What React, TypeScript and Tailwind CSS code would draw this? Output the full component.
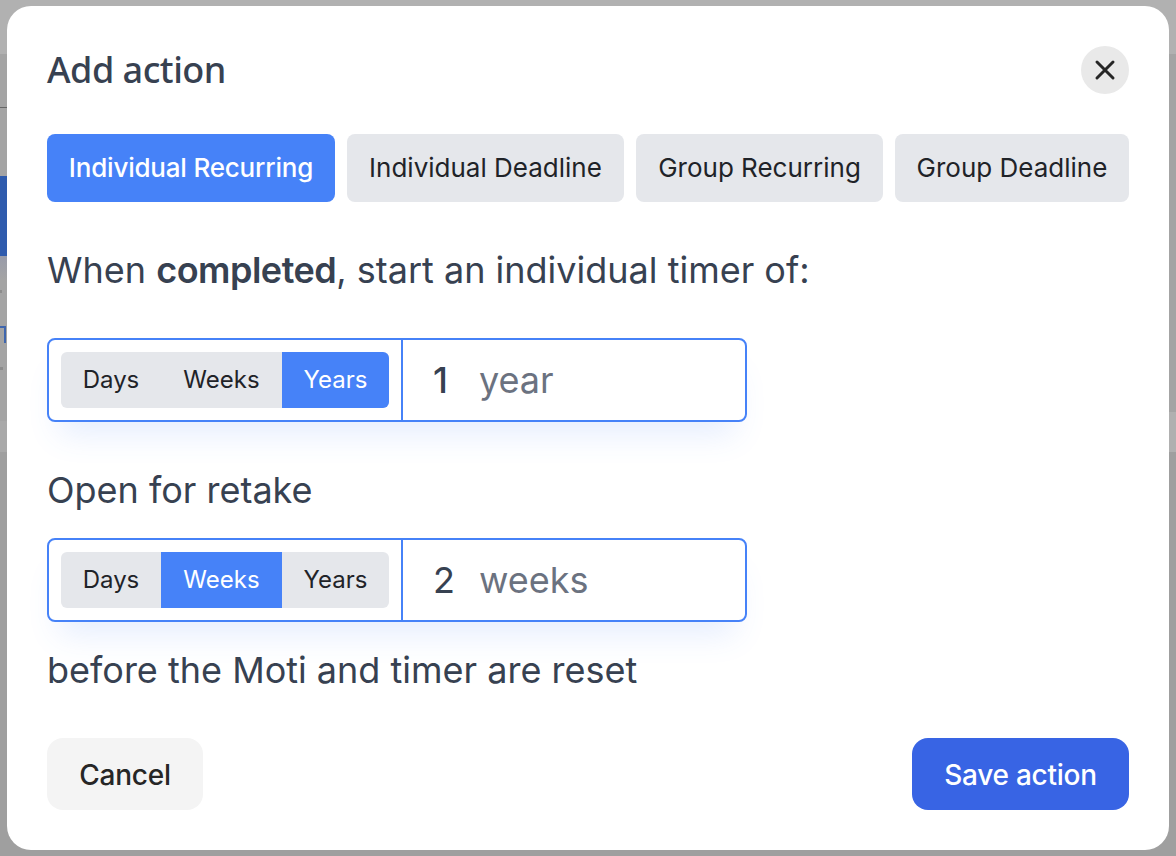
import { useState } from 'react'

const units = [
    { name: 'Days', width: 'w-[100px]' },
    { name: 'Weeks', width: 'w-[121px]' },
    { name: 'Years', width: 'w-[107px]' },
]
const tabs = ['Individual Recurring', 'Individual Deadline', 'Group Recurring', 'Group Deadline']

function Backdrop() {
    return (
        <div className="absolute inset-0 flex flex-col overflow-hidden">
            <div className="h-[54px] bg-[#b1b1b1]" />
            <div className="relative h-[122px] bg-[#a4a4a4]">
                <div className="absolute left-0 top-[53px] h-px w-[7px] bg-[#666]" />
            </div>
            <div className="h-[80px] bg-[#a4a4a4]">
                <div className="h-full w-[20px] bg-[#2f5bad]" />
            </div>
            <div className="relative h-[156px] bg-[#a4a4a4]">
                <div className="absolute left-0 top-0 h-6 w-[20px] bg-gradient-to-b from-[#989ba9] to-[#a4a4a4]" />
                <div className="absolute left-0 top-[34px] h-[3px] w-[2px] bg-[#8c8c8c]" />
                {/* sliver of page content showing past the modal edge */}
                <div className="absolute left-0 top-[70px] h-[2px] w-[5px] bg-[#3f66ad]" />
                <div className="absolute left-[4px] top-[70px] h-[17px] w-[2px] bg-[#3f66ad]" />
                <div className="absolute left-0 top-[111px] h-[3px] w-[3px] bg-[#8c8c8c]" />
            </div>
            <div className="flex h-[40px]">
                <div className="w-[20px] bg-[#a4a4a4]">
                    <div className="mt-[9px] h-[31px] bg-[#a9a9a9]" />
                </div>
                <div className="flex-1 bg-[#b0b0b0]" />
            </div>
            <div className="flex-1 bg-[#9f9f9f]" />
        </div>
    )
}

function DurationField({ active, value, unit, strong }: { active: string; value: string; unit: string; strong?: boolean }) {
    return (
        <div className="flex h-[84px] w-[700px] items-stretch rounded-lg border-2 border-[#4682f8] bg-white shadow-[0_24px_32px_-12px_rgba(70,130,248,0.14)]">
            <div className="flex items-center border-r-2 border-[#4682f8] px-3">
                <div className="flex h-14 overflow-hidden rounded-md bg-[#e5e7eb] text-2xl text-[#1f2328]">
                    {units.map(u => (
                        <div key={u.name} className={`flex items-center justify-center ${u.width} ${u.name === active ? 'bg-[#4682f8] text-white' : ''}`}>
                            {u.name}
                        </div>
                    ))}
                </div>
            </div>
            <div className="flex items-center pl-[30px] text-4xl leading-none">
                <span className={`w-[46px] text-[#374151] ${strong ? 'font-medium' : ''}`}>{value}</span>
                <span className="text-[#6b7280]">{unit}</span>
            </div>
        </div>
    )
}

export default function App() {
    const [tab, setTab] = useState(tabs[0])

    return (
        <div className="relative flex h-[856px] w-[1176px] items-center justify-center overflow-hidden font-['Inter',sans-serif]">
            <Backdrop />
            <div className="relative h-[844px] w-[1162px] rounded-3xl bg-white px-10 pt-10">
                <div className="flex h-12 items-center justify-between">
                    <h2 className="font-['Noto_Sans',sans-serif] text-4xl font-medium tracking-[-0.5px] text-[#374151]">Add action</h2>
                    <button className="flex h-12 w-12 items-center justify-center rounded-full bg-[#e9e9e9] text-[#262626]">
                        <svg width="24" height="24" viewBox="0 0 24 24" fill="none" stroke="currentColor" strokeWidth="3" strokeLinecap="round">
                            <path d="M4 4l16 16M20 4L4 20" />
                        </svg>
                    </button>
                </div>

                <div className="mt-10 grid grid-cols-[288px_277px_247px_234px] gap-3">
                    {tabs.map(t => (
                        <button
                            key={t}
                            onClick={() => setTab(t)}
                            className={`h-[68px] whitespace-nowrap rounded-lg pb-0.5 text-[26px] ${t === tab ? 'bg-[#4682f8] font-medium tracking-[-0.2px] text-white' : 'bg-[#e5e7eb] text-[#1f2328]'}`}
                        >
                            {t}
                        </button>
                    ))}
                </div>

                <p className="mt-[44px] text-4xl leading-[48px] text-[#374151]">
                    When <b className="font-semibold tracking-[-0.5px]">completed</b>, start an individual timer of:
                </p>
                <div className="mt-[44px]">
                    <DurationField active="Years" value="1" unit="year" strong />
                </div>
                <p className="mt-[44px] text-4xl leading-[48px] text-[#374151]">Open for retake</p>
                <div className="mt-6">
                    <DurationField active="Weeks" value="2" unit="weeks" />
                </div>
                <p className="mt-6 text-4xl leading-[48px] text-[#374151]">before the Moti and timer are reset</p>

                <div className="mt-11 flex justify-between">
                    <button className="h-[72px] w-[156px] rounded-2xl bg-[#f4f4f4] pt-px text-[28px] font-medium tracking-[-0.25px] text-[#262626]">Cancel</button>
                    <button className="h-[72px] w-[217px] rounded-2xl bg-[#3864e4] pt-px text-[28px] font-medium tracking-[-0.25px] text-white">Save action</button>
                </div>
            </div>
        </div>
    )
}
